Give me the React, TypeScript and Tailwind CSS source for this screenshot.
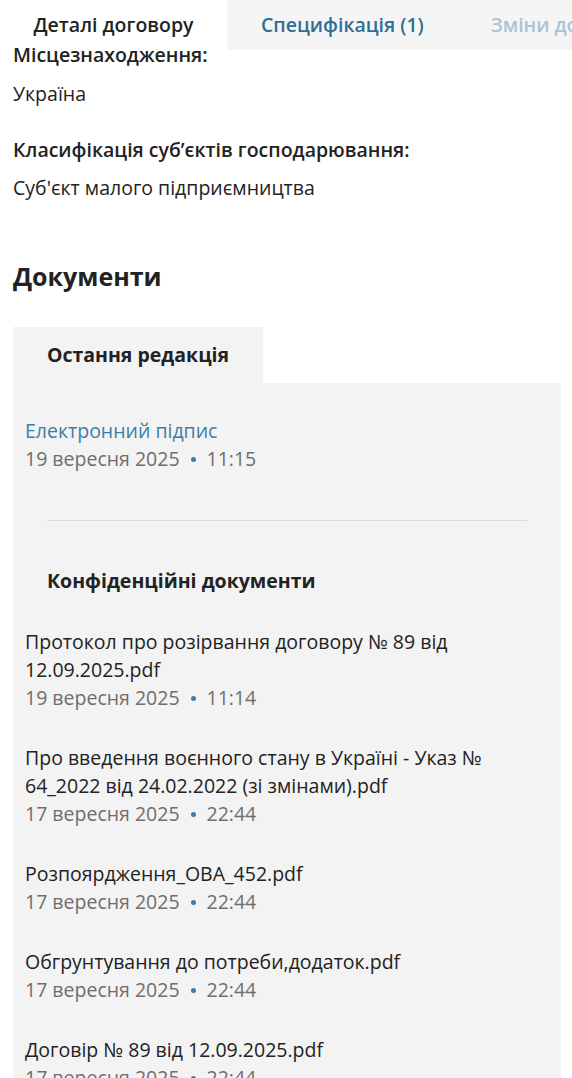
import React from 'react';

interface DocItem {
  name: string;
  date: string;
  time: string;
}

const docs: DocItem[] = [
  { name: 'Протокол про розірвання договору № 89 від 12.09.2025.pdf', date: '19 вересня 2025', time: '11:14' },
  { name: 'Про введення воєнного стану в Україні - Указ № 64_2022 від 24.02.2022 (зі змінами).pdf', date: '17 вересня 2025', time: '22:44' },
  { name: 'Розпоярдження_ОВА_452.pdf', date: '17 вересня 2025', time: '22:44' },
  { name: 'Обгрунтування до потреби,додаток.pdf', date: '17 вересня 2025', time: '22:44' },
  { name: 'Договір № 89 від 12.09.2025.pdf', date: '17 вересня 2025', time: '22:44' },
];

const DateLine: React.FC<{ date: string; time: string }> = ({ date, time }) => (
  <div className="text-[#6e6e6e] leading-[28px] flex items-center">
    {date}
    <span className="inline-block w-[5px] h-[5px] rounded-full bg-[#3f7aa5] mx-[11px]" />
    {time}
  </div>
);

export default function App() {
  return (
    <div className="w-[572px] h-[1078px] overflow-hidden bg-white text-[19.5px] text-[#222] font-['Open_Sans',sans-serif]">
      {/* Top tabs */}
      <div className="flex h-[50px] whitespace-nowrap overflow-hidden font-semibold">
        <div className="w-[227px] shrink-0 flex items-center justify-center text-[#222]">Деталі договору</div>
        <div className="flex-1 bg-[#f5f5f5] flex items-center">
          <span className="ml-[34px] text-[#2e6e96]">Специфікація (1)</span>
          <span className="ml-[67px] text-[#a6c4d4]">Зміни до договору</span>
        </div>
      </div>

      <div className="px-[13px]">
        <div className="-mt-[9px] leading-[28px] font-semibold">Місцезнаходження:</div>
        <div className="mt-[11px] leading-[28px]">Україна</div>

        <div className="mt-[28px] leading-[28px] font-semibold">Класифікація суб’єктів господарювання:</div>
        <div className="mt-[10px] leading-[28px]">Суб'єкт малого підприємництва</div>

        <h2 className="mt-[56px] text-[25px] font-bold leading-[36px]">Документи</h2>

        <div className="mt-[33px] w-[548px]">
          <div className="w-[250px] h-[56px] bg-[#f3f3f4] flex items-center justify-center font-bold">
            Остання редакція
          </div>
          <div className="bg-[#f3f3f4] pt-[34px] pb-[40px]">
            <div className="px-[12px]">
              <div className="text-[#3d7fa3] leading-[28px]">Електронний підпис</div>
              <DateLine date="19 вересня 2025" time="11:15" />
            </div>

            <div className="mx-[34px] mt-[47px] border-t border-[#dcdcdc]" />

            <div className="px-[34px] mt-[46px] font-bold leading-[28px]">Конфіденційні документи</div>

            <div className="px-[12px] mt-[33px] flex flex-col gap-[32px]">
              {docs.map((d) => (
                <div key={d.name}>
                  <div className="leading-[28px] pr-[50px]">{d.name}</div>
                  <DateLine date={d.date} time={d.time} />
                </div>
              ))}
            </div>
          </div>
        </div>
      </div>
    </div>
  );
}
